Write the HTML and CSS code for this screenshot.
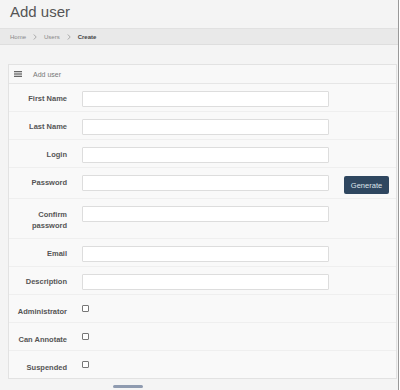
FILE: index.html
```html
<!DOCTYPE html>
<html lang="en">
<head>
  <meta charset="UTF-8">
  <meta name="viewport" content="width=device-width, initial-scale=1.0">
  <title>Add user</title>
  <link rel="stylesheet" href="styles.css">
</head>
<body>
  <div class="page">
    <h1 class="title">Add user</h1>
    <div class="breadcrumb">
      <span>Home</span>
      <svg class="chev" width="4" height="6" viewBox="0 0 4 6"><path d="M0.8 0.5 L3.2 3 L0.8 5.5" fill="none" stroke="#999" stroke-width="0.8"/></svg>
      <span>Users</span>
      <svg class="chev" width="4" height="6" viewBox="0 0 4 6"><path d="M0.8 0.5 L3.2 3 L0.8 5.5" fill="none" stroke="#999" stroke-width="0.8"/></svg>
      <span class="current">Create</span>
    </div>

    <div class="panel">
      <div class="panel-head">
        <svg class="menu-icon" width="8" height="6" viewBox="0 0 8 6">
          <rect x="0" y="0" width="8" height="1.3" fill="#666"/>
          <rect x="0" y="2.35" width="8" height="1.3" fill="#666"/>
          <rect x="0" y="4.7" width="8" height="1.3" fill="#666"/>
        </svg>
        <span>Add user</span>
      </div>
      <form class="user-form" action="#" method="POST">
        <div class="form-row">
          <label for="firstName">First Name</label>
          <input type="text" id="firstName" name="firstName">
        </div>
        <div class="form-row">
          <label for="lastName">Last Name</label>
          <input type="text" id="lastName" name="lastName">
        </div>
        <div class="form-row">
          <label for="login">Login</label>
          <input type="text" id="login" name="login">
        </div>
        <div class="form-row">
          <label for="password">Password</label>
          <input type="password" id="password" name="password">
          <button type="button" class="btn-generate">Generate</button>
        </div>
        <div class="form-row">
          <label for="confirm" class="two-line">Confirm password</label>
          <input type="password" id="confirm" name="confirm">
        </div>
        <div class="form-row">
          <label for="email">Email</label>
          <input type="text" id="email" name="email">
        </div>
        <div class="form-row">
          <label for="description">Description</label>
          <input type="text" id="description" name="description">
        </div>
        <div class="form-row check-row">
          <label for="admin">Administrator</label>
          <input type="checkbox" id="admin" name="admin">
        </div>
        <div class="form-row check-row">
          <label for="annotate">Can Annotate</label>
          <input type="checkbox" id="annotate" name="annotate">
        </div>
        <div class="form-row check-row">
          <label for="suspended">Suspended</label>
          <input type="checkbox" id="suspended" name="suspended">
        </div>
      </form>
    </div>
    <div class="scroll-thumb"></div>
  </div>
</body>
</html>
```

FILE: styles.css
```css
body {
  margin: 0;
  background-color: #fff;
  font-family: "Liberation Sans", Arial, sans-serif;
  overflow: hidden;
}
.page {
  width: 398px;
  height: 390px;
  background-color: #f4f4f4;
  border-right: 1px solid #999;
}
.title {
  margin: 0 0 6px 0;
  padding: 2px 0 0 10px;
  font-size: 15px;
  line-height: 20px;
  font-weight: normal;
  color: #555;
}
.breadcrumb {
  display: flex;
  align-items: center;
  gap: 7px;
  height: 15px;
  padding-left: 10px;
  background-color: #e9e9e9;
  border-top: 1px solid #e1e1e1;
  border-bottom: 1px solid #dedede;
  font-size: 6px;
  color: #888;
}
.breadcrumb .current {
  font-weight: bold;
  color: #444;
}
.panel {
  margin: 19px 1px 0 8px;
  background-color: #f9f9f9;
  border: 1px solid #e2e2e2;
}
.panel-head {
  display: flex;
  align-items: center;
  height: 18px;
  padding-left: 5px;
  border-bottom: 1px solid #e6e6e6;
  background-color: #f8f8f8;
  font-size: 7px;
  color: #777;
}
.menu-icon {
  margin-right: 11px;
}
.form-row {
  display: grid;
  grid-template-columns: 58px 247px auto;
  column-gap: 15px;
  align-items: start;
  padding: 7px 0 4px 0;
  border-bottom: 1px solid #efefef;
}
.form-row:last-child {
  border-bottom: none;
}
.form-row label {
  text-align: right;
  font-size: 7.5px;
  line-height: 16px;
  font-weight: bold;
  color: #555;
}
.form-row label.two-line {
  line-height: 10.5px;
  padding: 4px 0 3px 0;
}
.form-row input[type="text"],
.form-row input[type="password"] {
  box-sizing: border-box;
  width: 247px;
  height: 16px;
  margin: 0;
  border: 1px solid #ddd;
  border-radius: 1px;
  background-color: #fff;
}
.btn-generate {
  width: 45px;
  height: 18px;
  margin-top: 1px;
  padding: 0;
  border: none;
  border-radius: 2px;
  background-color: #2f4760;
  color: #dde3ea;
  font-family: "Liberation Sans", Arial, sans-serif;
  font-size: 7.5px;
}
.check-row label {
  line-height: 13px;
  padding-top: 3px;
}
.check-row input[type="checkbox"] {
  appearance: none;
  -webkit-appearance: none;
  width: 7px;
  height: 7px;
  margin: 3px 0 0 0;
  border: 1px solid #777;
  border-radius: 1px;
  background-color: #fff;
}
.scroll-thumb {
  width: 30px;
  height: 3px;
  margin: 6px 0 0 113px;
  border-radius: 2px;
  background-color: #8f9bb0;
}
```
